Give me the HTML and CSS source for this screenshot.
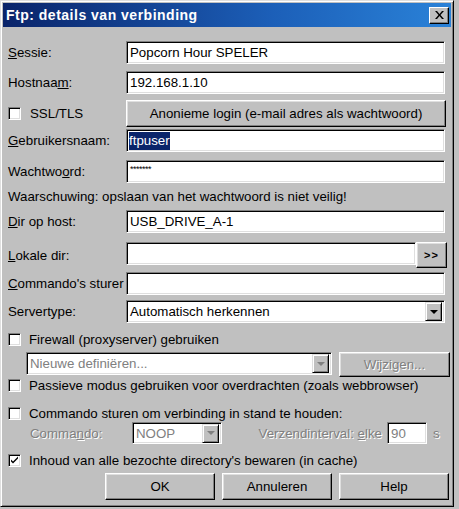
FILE: index.html
```html
<!DOCTYPE html>
<html>
<head>
  <title>Ftp: details van verbinding</title>
  <meta charset="utf-8">
  <link rel="stylesheet" href="styles.css">
</head>
<body>
  <div class="dialog">
    <div class="titlebar">
      <span class="title">Ftp: details van verbinding</span>
      <span class="close">
        <svg width="9" height="8" viewBox="0 0 9 8"><path d="M0 0h2l2.5 3 2.5-3h2l-3.5 4 3.5 4h-2l-2.5-3-2.5 3h-2l3.5-4z" fill="#000"/></svg>
      </span>
    </div>

    <div class="content">
      <div class="row">
        <label class="lbl"><u>S</u>essie:</label>
        <div class="field">Popcorn Hour SPELER</div>
      </div>
      <div class="row">
        <label class="lbl">Hostnaa<u>m</u>:</label>
        <div class="field">192.168.1.10</div>
      </div>
      <div class="row row-btn">
        <label class="lbl check-lbl"><span class="box"></span>SSL/TLS</label>
        <div class="button wide">Anonieme login (e-mail adres als wachtwoord)</div>
      </div>
      <div class="row tight">
        <label class="lbl"><u>G</u>ebruikersnaam:</label>
        <div class="field"><span class="selected">ftpuser</span></div>
      </div>
      <div class="row loose">
        <label class="lbl">Wachtwo<u>o</u>rd:</label>
        <div class="field pw">*******</div>
      </div>
      <div class="row warn">Waarschuwing: opslaan van het wachtwoord is niet veilig!</div>
      <div class="row after-warn">
        <label class="lbl"><u>D</u>ir op host:</label>
        <div class="field">USB_DRIVE_A-1</div>
      </div>
      <div class="row lokale">
        <label class="lbl"><u>L</u>okale dir:</label>
        <div class="field short"></div>
        <div class="button browse">&gt;&gt;</div>
      </div>
      <div class="row after-lokale">
        <label class="lbl"><u>C</u>ommando's sturer</label>
        <div class="field"></div>
      </div>
      <div class="row after-cmd">
        <label class="lbl">Servertype:</label>
        <div class="field select">
          <span class="sel-text">Automatisch herkennen</span>
          <span class="drop"><span class="arrow"></span></span>
        </div>
      </div>

      <div class="check firewall"><span class="box"></span>Firewall (proxyserver) gebruiken</div>
      <div class="row indent proxy">
        <div class="field select proxy-sel disabled">
          <span class="sel-text">Nieuwe definiëren...</span>
          <span class="drop"><span class="arrow"></span></span>
        </div>
        <div class="button disabled wijzig">Wijzigen...</div>
      </div>
      <div class="check passief"><span class="box"></span>Passieve modus gebruiken voor overdrachten (zoals webbrowser)</div>
      <div class="check keepalive"><span class="box"></span>Commando sturen om verbinding in stand te houden:</div>
      <div class="row keep-opts">
        <span class="dim cmd-lbl">Comma<u>n</u>do:</span>
        <div class="field select noop disabled">
          <span class="sel-text">NOOP</span>
          <span class="drop"><span class="arrow"></span></span>
        </div>
        <span class="dim interval">Verzendinterval: <u>e</u>lke</span>
        <div class="field secs disabled">90</div>
        <span class="dim unit">s</span>
      </div>
      <div class="check cache"><span class="box checked"><svg width="9" height="9" viewBox="0 0 9 9"><path d="M1 3.5l2 2 5-5v2l-5 5-2-2z" fill="#000"/></svg></span>Inhoud van alle bezochte directory's bewaren (in cache)</div>

      <div class="actions">
        <div class="button default">OK</div>
        <div class="button">Annuleren</div>
        <div class="button">Help</div>
      </div>
    </div>
  </div>
</body>
</html>
```

FILE: styles.css
```css
body {
  margin: 0;
  background: #c0c0c0;
  font-family: "Liberation Sans", Arial, sans-serif;
  font-size: 13.3px;
  color: #000;
}
.dialog {
  box-sizing: border-box;
  width: 454px;
  height: 507px;
  padding: 2px;
  background: #c0c0c0;
  border: 1px solid;
  border-color: #dfdfdf #000 #000 #dfdfdf;
  box-shadow: inset 1px 1px #fff, inset -1px -1px #808080;
}
.titlebar {
  height: 24px;
  display: flex;
  align-items: center;
  justify-content: space-between;
  padding: 0 2px 0 3px;
  background: linear-gradient(to right, #0a246a, #1c5fb8 60%, #2a82d8);
}
.title {
  color: #fff;
  font-weight: bold;
  font-size: 14px;
  letter-spacing: 0.5px;
}
.close {
  box-sizing: border-box;
  width: 20px;
  height: 17px;
  display: flex;
  align-items: center;
  justify-content: center;
  background: #c0c0c0;
  border: 1px solid;
  border-color: #fff #000 #000 #fff;
  box-shadow: inset -1px -1px #808080;
}
.content {
  display: flex;
  flex-direction: column;
  padding: 14px 0 0 5px;
}
.row {
  display: flex;
  align-items: center;
  height: 23px;
  margin-top: 7px;
}
.row:first-child { margin-top: 0; }
.lbl {
  width: 118px;
  flex: none;
  white-space: nowrap;
}
.field {
  box-sizing: border-box;
  width: 319px;
  height: 23px;
  display: flex;
  align-items: center;
  padding: 0 3px;
  background: #fff;
  border: 1px solid;
  border-color: #808080 #fff #fff #808080;
  box-shadow: inset 1px 1px #000, inset -1px -1px #dfdfdf;
  white-space: nowrap;
  overflow: hidden;
}
.button {
  box-sizing: border-box;
  display: flex;
  align-items: center;
  justify-content: center;
  background: #c0c0c0;
  border: 1px solid;
  border-color: #fff #000 #000 #fff;
  box-shadow: inset -1px -1px #808080, inset 1px 1px #dfdfdf;
  white-space: nowrap;
}
.button.disabled {
  color: #808080;
  text-shadow: 1px 1px #fff;
}
.row-btn { height: 27px; margin-top: 6px; }
.wide { width: 320px; height: 27px; }
.tight { margin-top: 2px; }
.loose { margin-top: 8px; }
.selected {
  background: #0a246a;
  color: #fff;
  padding: 1px 0 2px;
  margin-left: -1px;
}
.pw {
  align-items: flex-start;
  padding-top: 3px;
  font-size: 9px;
  letter-spacing: -0.5px;
}
.warn { height: 16px; margin-top: 5px; }
.after-warn { margin-top: 6px; }
.lokale { height: 26px; margin-top: 9px; align-items: flex-start; }
.lokale .lbl { align-self: center; }
.short { width: 290px; }
.browse { width: 31px; height: 26px; font-weight: bold; font-size: 11px; letter-spacing: 1px; }
.after-lokale { margin-top: 4px; }
.after-cmd { margin-top: 5px; }
.select {
  justify-content: space-between;
  padding-right: 2px;
}
.drop {
  box-sizing: border-box;
  width: 17px;
  height: 19px;
  display: flex;
  align-items: center;
  justify-content: center;
  background: #c0c0c0;
  border: 1px solid;
  border-color: #dfdfdf #000 #000 #dfdfdf;
  box-shadow: inset 1px 1px #fff, inset -1px -1px #808080;
}
.arrow {
  width: 0;
  height: 0;
  border-left: 4px solid transparent;
  border-right: 4px solid transparent;
  border-top: 4px solid #000;
}
.disabled .sel-text, .field.disabled { color: #808080; }
.disabled .arrow { border-top-color: #808080; }
.check {
  display: flex;
  align-items: center;
  height: 15px;
  white-space: nowrap;
}
.box {
  box-sizing: border-box;
  width: 13px;
  height: 13px;
  flex: none;
  display: flex;
  align-items: center;
  justify-content: center;
  margin-right: 8px;
  background: #fff;
  border: 1px solid;
  border-color: #808080 #fff #fff #808080;
  box-shadow: inset 1px 1px #000, inset -1px -1px #dfdfdf;
}
.check-lbl { display: flex; align-items: center; }
.check-lbl .box { margin-right: 9px; }
.firewall { margin-top: 9px; }
.indent { padding-left: 18px; }
.proxy { height: 25px; margin-top: 5px; align-items: flex-start; }
.proxy-sel { width: 306px; }
.wijzig { width: 111px; height: 25px; margin-left: 7px; }
.passief { margin-top: 1px; }
.keepalive { margin-top: 13px; }
.keep-opts { height: 22px; margin-top: 1px; }
.dim {
  color: #808080;
  text-shadow: 1px 1px #fff;
  white-space: nowrap;
}
.cmd-lbl { margin-left: 22px; width: 102px; }
.noop { width: 90px; height: 22px; }
.interval { width: 160px; text-align: right; margin-right: 5px; }
.secs { width: 40px; height: 22px; }
.unit { margin-left: 6px; }
.cache { margin-top: 9px; }
.actions {
  display: flex;
  gap: 7px;
  margin-top: 5px;
  padding-left: 97px;
}
.actions .button { width: 110px; height: 27px; }
.actions .default { border-color: #fff #000 #000 #fff; }
```
